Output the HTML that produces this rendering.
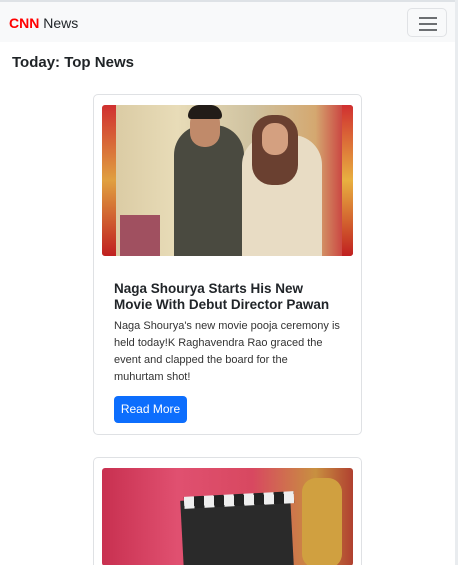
<!DOCTYPE html>
<html style="overflow:hidden;height:565px"><head><style>
*{box-sizing:border-box;margin:0;padding:0}
body{width:458px;height:565px;overflow:hidden;background:#fff;font-family:"Liberation Sans","DejaVu Sans",sans-serif;color:#212529;position:relative}
.top{position:absolute;left:0;top:0;width:458px;height:2px;background:#dee2e6}
.nav{position:absolute;left:0;top:2px;width:455px;height:40px;background:#f8f9fa}
.brand{position:absolute;left:9px;top:13px;font-size:14px}
.brand b{color:#f00}
.tog{position:absolute;left:407px;top:6px;width:40px;height:29px;border:1px solid #e0e2e5;border-radius:5px}
.tog i{position:absolute;left:11px;width:18px;height:2px;background:#6c6f72}
.rb{position:absolute;left:455px;top:0;width:3px;height:565px;background:#e9ecef}
h1{position:absolute;left:12px;top:54px;font-size:15px;font-weight:bold;color:#1f2326}
.card{position:absolute;left:93px;width:269px;border:1px solid #dfe1e4;border-radius:5px;background:#fff;overflow:hidden}
.img{position:absolute;left:8px;top:10px;width:251px;height:151px;overflow:hidden;border-radius:3px}
.t{position:absolute;left:20px;top:186px;font-size:13.5px;font-weight:bold;line-height:16px;width:226px;color:#212529}
.p{position:absolute;left:20px;top:223px;font-size:11px;line-height:17px;width:240px;color:#333}
.btn{position:absolute;left:20px;top:301px;width:73px;height:27px;background:#0d6efd;color:#fff;border-radius:4px;font-size:12px;text-align:center;line-height:27px}
</style></head><body>
<div class="top"></div>
<div class="nav"><div class="brand"><b>CNN</b> News</div>
<div class="tog"><i style="top:8px"></i><i style="top:14px"></i><i style="top:20px"></i></div></div>
<div class="rb"></div>
<h1>Today: Top News</h1>
<div class="card" style="top:94px;height:341px">
<div class="img" style="background:linear-gradient(90deg,#d8c8a0,#e8dcb8 30%,#cfc2a0 60%,#d4a870 85%,#c82030)">
<div style="position:absolute;left:0;top:0;width:14px;height:151px;background:linear-gradient(#d03030,#e0a040,#c02020)"></div>
<div style="position:absolute;left:240px;top:0;width:11px;height:151px;background:linear-gradient(#d03030,#e8b040,#c02020)"></div>
<div style="position:absolute;left:72px;top:20px;width:70px;height:131px;background:#4a4a40;border-radius:30px 30px 0 0"></div>
<div style="position:absolute;left:88px;top:4px;width:30px;height:38px;background:#c08a6a;border-radius:14px"></div>
<div style="position:absolute;left:86px;top:0px;width:34px;height:14px;background:#221c18;border-radius:14px 14px 4px 4px"></div>
<div style="position:absolute;left:140px;top:30px;width:80px;height:121px;background:#e8dcc4;border-radius:30px 30px 0 0"></div>
<div style="position:absolute;left:150px;top:10px;width:46px;height:70px;background:#6a4030;border-radius:20px"></div>
<div style="position:absolute;left:160px;top:18px;width:26px;height:32px;background:#d4a080;border-radius:12px"></div>
<div style="position:absolute;left:18px;top:110px;width:40px;height:41px;background:#a05060"></div>
</div>
<div class="t">Naga Shourya Starts His New Movie With Debut Director Pawan</div>
<div class="p">Naga Shourya's new movie pooja ceremony is<br>held today!K Raghavendra Rao graced the<br>event and clapped the board for the<br>muhurtam shot!</div>
<div class="btn">Read More</div>
</div>
<div class="card" style="top:457px;height:108px;border-bottom:none;border-radius:5px 5px 0 0">
<div class="img" style="height:98px;background:linear-gradient(90deg,#c83050,#e05070 30%,#d84860 60%,#c89040 85%,#b04030)">
<div style="position:absolute;left:80px;top:30px;width:110px;height:70px;background:#2a2a2a;transform:rotate(-3deg)"></div>
<div style="position:absolute;left:82px;top:26px;width:110px;height:12px;background:repeating-linear-gradient(90deg,#eee 0 10px,#222 10px 20px);transform:rotate(-3deg)"></div>
<div style="position:absolute;left:200px;top:10px;width:40px;height:90px;background:#d0a040;border-radius:14px"></div>
</div>
</div>
</body></html>
